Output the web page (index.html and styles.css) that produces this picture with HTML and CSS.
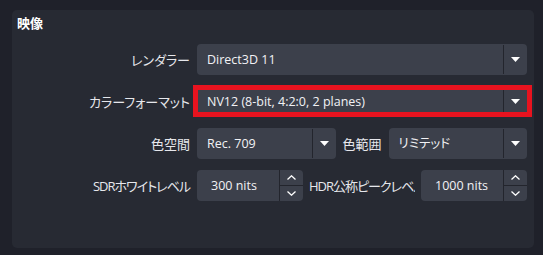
FILE: index.html
```html
<!DOCTYPE html>
<html lang="ja">
<head>
  <meta charset="UTF-8">
  <meta name="viewport" content="width=device-width, initial-scale=1.0">
  <title>映像</title>
  <link rel="stylesheet" href="styles.css">
</head>
<body>

  <div class="panel">
    <div class="title">映像</div>

    <div class="form">
      <div class="form-label">レンダラー</div>
      <div class="combo">
        <span class="combo-text">Direct3D 11</span>
        <span class="combo-btn">
          <svg width="9" height="5" viewBox="0 0 9 5"><polygon points="0,0 9,0 4.5,5" fill="#fff"/></svg>
        </span>
      </div>

      <div class="form-label">カラーフォーマット</div>
      <div class="field-wrap">
        <div class="combo">
          <span class="combo-text">NV12 (8-bit, 4:2:0, 2 planes)</span>
          <span class="combo-btn">
            <svg width="9" height="5" viewBox="0 0 9 5"><polygon points="0,0 9,0 4.5,5" fill="#fff"/></svg>
          </span>
        </div>
        <div class="highlight"></div>
      </div>

      <div class="form-label">色空間</div>
      <div class="pair">
        <div class="combo">
          <span class="combo-text">Rec. 709</span>
          <span class="combo-btn">
            <svg width="9" height="5" viewBox="0 0 9 5"><polygon points="0,0 9,0 4.5,5" fill="#fff"/></svg>
          </span>
        </div>
        <span class="inline-label">色範囲</span>
        <div class="combo">
          <span class="combo-text">リミテッド</span>
          <span class="combo-btn">
            <svg width="9" height="5" viewBox="0 0 9 5"><polygon points="0,0 9,0 4.5,5" fill="#fff"/></svg>
          </span>
        </div>
      </div>

      <div class="form-label tight">SDRホワイトレベル</div>
      <div class="pair even">
        <div class="spin">
          <span class="spin-text">300 nits</span>
          <span class="spin-btns">
            <span class="spin-up"><svg width="9" height="5" viewBox="0 0 9 5"><polyline points="0.5,4.5 4.5,0.8 8.5,4.5" fill="none" stroke="#fff" stroke-width="1.3"/></svg></span>
            <span class="spin-down"><svg width="9" height="5" viewBox="0 0 9 5"><polyline points="0.5,0.5 4.5,4.2 8.5,0.5" fill="none" stroke="#fff" stroke-width="1.3"/></svg></span>
          </span>
        </div>
        <span class="inline-label clip tight">HDR公称ピークレベル</span>
        <div class="spin">
          <span class="spin-text">1000 nits</span>
          <span class="spin-btns">
            <span class="spin-up"><svg width="9" height="5" viewBox="0 0 9 5"><polyline points="0.5,4.5 4.5,0.8 8.5,4.5" fill="none" stroke="#fff" stroke-width="1.3"/></svg></span>
            <span class="spin-down"><svg width="9" height="5" viewBox="0 0 9 5"><polyline points="0.5,0.5 4.5,4.2 8.5,0.5" fill="none" stroke="#fff" stroke-width="1.3"/></svg></span>
          </span>
        </div>
      </div>
    </div>
  </div>

</body>
</html>
```

FILE: styles.css
```css
body {
  margin: 0;
  background-color: #1f212a;
  font-family: 'Open Sans', 'Noto Sans CJK JP', sans-serif;
  font-feature-settings: "palt";
  color: #e6e7ec;
  height: 255px;
  overflow: hidden;
}

.panel {
  margin: 10px 9px 0 12px;
  height: 238px;
  box-sizing: border-box;
  padding: 4px 7px 0 5px;
  background-color: #272a33;
  border-radius: 5px;
}

.title {
  font-size: 13px;
  font-weight: bold;
  line-height: 18px;
  color: #fff;
}

.form {
  display: grid;
  grid-template-columns: 173px 1fr;
  grid-auto-rows: 31px;
  column-gap: 7px;
  row-gap: 11px;
  margin-top: 12px;
}

.form-label {
  display: flex;
  align-items: center;
  justify-content: flex-end;
  font-size: 13px;
  white-space: nowrap;
}

.tight {
  letter-spacing: -1px;
}

.combo,
.spin {
  display: flex;
  height: 31px;
  background-color: #3c404b;
  border-radius: 4px;
  font-size: 12.5px;
  color: #f2f2f5;
  min-width: 0;
}

.combo-text {
  flex: 1;
  padding-left: 10px;
  line-height: 31px;
  white-space: nowrap;
  overflow: hidden;
}

.combo-btn {
  width: 23px;
  display: flex;
  align-items: center;
  justify-content: center;
  border-left: 1px solid #23252d;
  margin: 1px 0;
}

.field-wrap {
  position: relative;
}

.highlight {
  position: absolute;
  top: -1px;
  left: -4px;
  right: -5px;
  bottom: 0;
  border: 5px solid #e8131f;
}

.pair {
  display: flex;
  gap: 7px;
}

.pair .combo {
  flex: 1 1 0;
}

.inline-label {
  display: flex;
  align-items: center;
  font-size: 13px;
  white-space: nowrap;
}

.pair.even {
  gap: 6px;
}

.pair.even > * {
  flex: 1 1 0;
}

.clip {
  overflow: hidden;
  min-width: 0;
}

.spin-text {
  flex: 1;
  padding-left: 14px;
  line-height: 31px;
  white-space: nowrap;
  overflow: hidden;
}

.spin-btns {
  width: 23px;
  display: flex;
  flex-direction: column;
  border-left: 1px solid #23252d;
}

.spin-up,
.spin-down {
  flex: 1;
  display: flex;
  align-items: center;
  justify-content: center;
}

.spin-up {
  border-bottom: 1px solid #23252d;
}
```
